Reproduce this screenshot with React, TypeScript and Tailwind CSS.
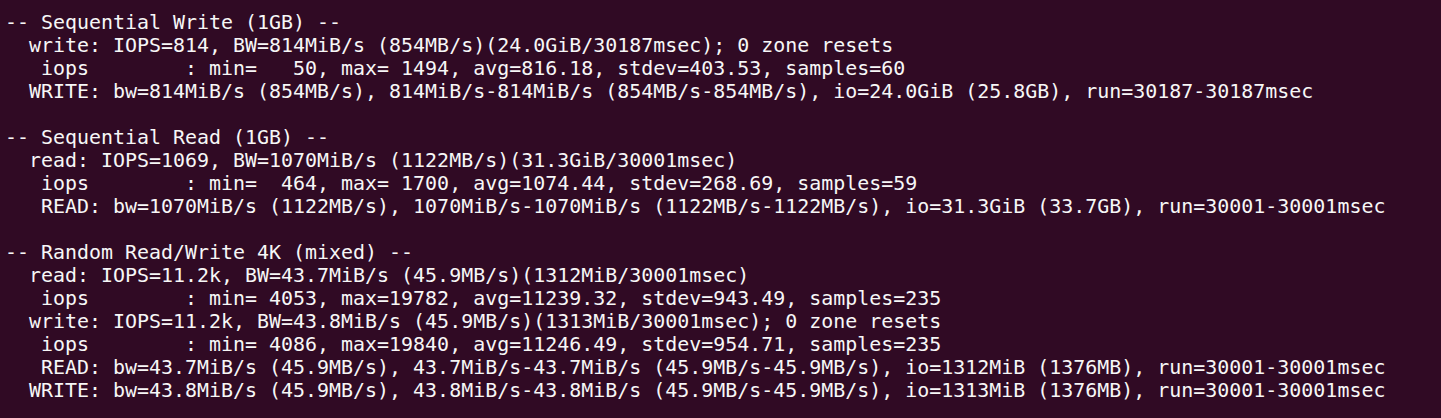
const lines = [
  "-- Sequential Write (1GB) --",
  "  write: IOPS=814, BW=814MiB/s (854MB/s)(24.0GiB/30187msec); 0 zone resets",
  "   iops        : min=   50, max= 1494, avg=816.18, stdev=403.53, samples=60",
  "  WRITE: bw=814MiB/s (854MB/s), 814MiB/s-814MiB/s (854MB/s-854MB/s), io=24.0GiB (25.8GB), run=30187-30187msec",
  "",
  "-- Sequential Read (1GB) --",
  "  read: IOPS=1069, BW=1070MiB/s (1122MB/s)(31.3GiB/30001msec)",
  "   iops        : min=  464, max= 1700, avg=1074.44, stdev=268.69, samples=59",
  "   READ: bw=1070MiB/s (1122MB/s), 1070MiB/s-1070MiB/s (1122MB/s-1122MB/s), io=31.3GiB (33.7GB), run=30001-30001msec",
  "",
  "-- Random Read/Write 4K (mixed) --",
  "  read: IOPS=11.2k, BW=43.7MiB/s (45.9MB/s)(1312MiB/30001msec)",
  "   iops        : min= 4053, max=19782, avg=11239.32, stdev=943.49, samples=235",
  "  write: IOPS=11.2k, BW=43.8MiB/s (45.9MB/s)(1313MiB/30001msec); 0 zone resets",
  "   iops        : min= 4086, max=19840, avg=11246.49, stdev=954.71, samples=235",
  "   READ: bw=43.7MiB/s (45.9MB/s), 43.7MiB/s-43.7MiB/s (45.9MB/s-45.9MB/s), io=1312MiB (1376MB), run=30001-30001msec",
  "  WRITE: bw=43.8MiB/s (45.9MB/s), 43.8MiB/s-43.8MiB/s (45.9MB/s-45.9MB/s), io=1313MiB (1376MB), run=30001-30001msec",
];

export default function App() {
  return (
    <div className="w-[1441px] h-[418px] overflow-hidden bg-[#300a24] pt-[11px] pl-[5px]">
      <pre className="m-0 font-['DejaVu_Sans_Mono',monospace] text-[19.95px] leading-[23px] text-[#f7f7f7] whitespace-pre">
        {lines.map((l, i) => (
          <div key={i} className="h-[23px]">{l}</div>
        ))}
      </pre>
    </div>
  );
}
